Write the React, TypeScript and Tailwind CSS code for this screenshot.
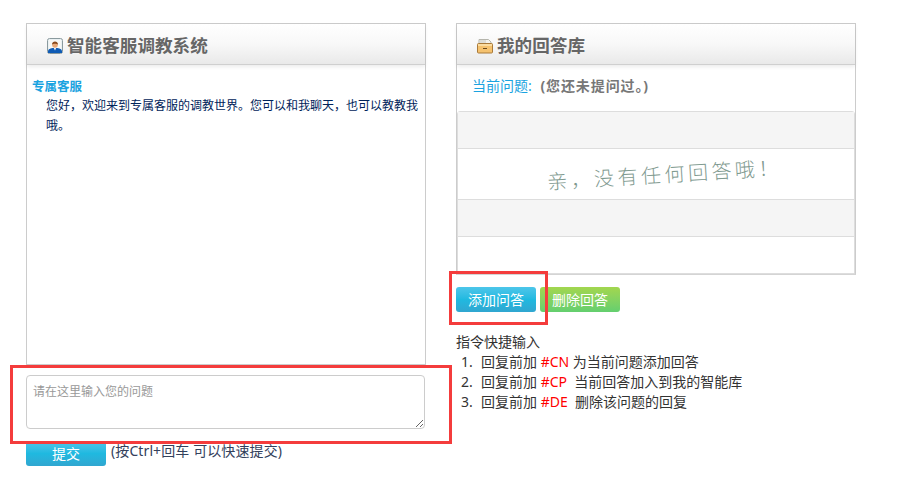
const cjk = "font-['Noto_Sans','Noto_Sans_CJK_SC',sans-serif]";

function UserIcon() {
  return (
    <svg width="16" height="16" viewBox="0 0 16 16" className="mr-[4px] shrink-0">
      <rect x="0.5" y="0.5" width="15" height="15" rx="2" fill="#e9f0f2" stroke="#8a9a9e" />
      <rect x="2" y="2" width="12" height="12" fill="#f7f7f4" />
      <path d="M1 15v-2.5C2 10.5 4.5 10 8 10s6 .5 7 2.500V15Z" fill="#0f5bb5" />
      <path d="M6.800 10h2.400L8 12.500Z" fill="#f4f4f4" />
      <circle cx="8" cy="7" r="2.800" fill="#e8a878" />
      <path d="M5 6.800C5 4.500 6.500 3.500 8 3.500s3 1 3 3.300C10 5.500 6 5.500 5 6.800Z" fill="#8a4a1c" />
    </svg>
  );
}

function BoxIcon() {
  return (
    <svg width="16" height="16" viewBox="0 0 16 16" className="mr-[4px] shrink-0">
      <path d="M2 6V1.500h9.500L14 4v2Z" fill="#f2f2ee" stroke="#b5b5ac" />
      <path d="M4 2v3M6 2v3M8 2v3" stroke="#c8c8c0" />
      <rect x="0.500" y="5.500" width="15" height="9.500" rx="1" fill="#f5c26f" stroke="#a97a3a" />
      <rect x="1" y="6" width="14" height="2" fill="#fbdca0" />
      <rect x="6" y="10" width="4" height="1" fill="#6b4a1e" />
    </svg>
  );
}

function PanelHead({ icon, title }: { icon: React.ReactNode; title: string }) {
  return (
    <div className="h-[41px] pl-[20px] pt-[3px] flex items-center border-b border-[#cfcfcf] bg-gradient-to-b from-[#ffffff] via-[#f8f8f8] to-[#e9e9e9] shadow-[0_2px_4px_rgba(0,0,0,0.08)]">
      {icon}
      <h2 className="text-[17.6px] leading-none font-bold text-[#666666]">{title}</h2>
    </div>
  );
}

function Btn({ label, green }: { label: string; green?: boolean }) {
  return (
    <button
      className={
        green
          ? "w-[80px] h-[25px] rounded-[3px] text-white text-[14px] leading-none bg-gradient-to-b from-[#a2d64e] to-[#63cf6f]"
          : "w-[80px] h-[25px] rounded-[3px] text-white text-[14px] leading-none bg-gradient-to-b from-[#4cc6ea] via-[#1fb9e0] to-[#30a6d0]"
      }
    >
      {label}
    </button>
  );
}

const commands = [
  { n: 1, code: "#CN", rest: " 为当前问题添加回答" },
  { n: 2, code: "#CP", rest: "  当前回答加入到我的智能库" },
  { n: 3, code: "#DE", rest: "  删除该问题的回复" },
];

export default function App() {
  return (
    <div className={`relative w-[918px] h-[487px] overflow-hidden bg-white ${cjk}`}>
      <div className="flex gap-[30px] pl-[26px] pt-[23px]">
        <div className="w-[400px]">
          <section className="h-[342px] border border-[#cccccc]">
            <PanelHead icon={<UserIcon />} title="智能客服调教系统" />
            <div className="pt-[12px] pl-[5px] pr-[6px] text-[12px] leading-[20px]">
              <p className="font-bold text-[12.5px] text-[#1ba3e0] leading-[19px]">专属客服</p>
              <p className="pl-[14px] text-[#00235a]">
                您好，欢迎来到专属客服的调教世界。您可以和我聊天，也可以教教我哦。
              </p>
            </div>
          </section>
          <textarea
            placeholder="请在这里输入您的问题"
            className="block mt-[10px] w-[399px] h-[54px] px-[6px] py-[6px] text-[12px] leading-[20px] rounded-[4px] border border-[#cccccc] placeholder:text-[#999999] outline-none"
          />
          <div className="mt-[12px] flex items-start gap-[5px]">
            <Btn label="提交" />
            <span className="text-[14px] leading-[20px] tracking-[0.1px] text-[#33415c]">(按Ctrl+回车 可以快速提交)</span>
          </div>
        </div>

        <div className="w-[400px]">
          <section className="h-[252px] border border-[#cccccc] border-b-2 border-b-[#d4d4d4]">
            <PanelHead icon={<BoxIcon />} title="我的回答库" />
            <p className="h-[46px] pl-[15px] pt-[11px] text-[14px] leading-[20px] text-[#1ba3e0]">
              当前问题: <b className="ml-[5px] tracking-[0.9px] text-[#777777]">(您还未提问过。)</b>
            </p>
            <div className="border border-[#dddddd] rounded-t-[3px]">
              <div className="h-[36px] bg-[#f5f5f5]" />
              <div className="h-[51px] border-t border-[#dddddd] flex justify-center items-center pl-[16px]">
                <span className="-rotate-[3.5deg] text-[20px] tracking-[3.5px] font-light text-[#7f9a90] font-['Noto_Sans_CJK_SC',sans-serif]">
                  亲，没有任何回答哦！
                </span>
              </div>
              <div className="h-[37px] border-t border-[#dddddd] bg-[#f5f5f5]" />
              <div className="h-[37px] border-t border-[#dddddd]" />
            </div>
          </section>
          <div className="mt-[12px] flex gap-[4px]">
            <Btn label="添加问答" />
            <Btn label="删除回答" green />
          </div>
          <div className="mt-[20px] text-[14px] leading-[20px] text-[#333333]">
            <p>指令快捷输入</p>
            <ol>
              {commands.map((c) => (
                <li key={c.code} className="flex">
                  <span className="w-[25px] pl-[5px]">{c.n}.</span>
                  <span className="whitespace-pre">
                    回复前加 <span className="text-[#ff0000]">{c.code}</span>
                    {c.rest}
                  </span>
                </li>
              ))}
            </ol>
          </div>
        </div>
      </div>

      {/* annotation boxes drawn over the page */}
      <div className="absolute left-[10px] top-[365px] w-[442px] h-[79px] border-[3px] border-[#f43c3c]" />
      <div className="absolute left-[449px] top-[271px] w-[99px] h-[54px] border-[3px] border-[#f43c3c]" />
    </div>
  );
}
